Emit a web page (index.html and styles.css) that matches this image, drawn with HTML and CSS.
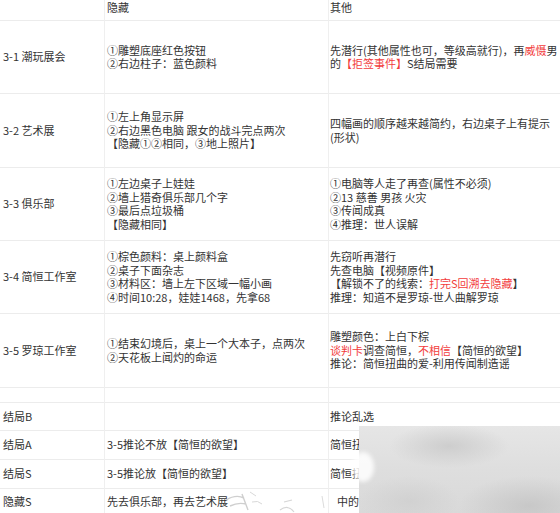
FILE: index.html
```html
<!DOCTYPE html>
<html lang="zh-CN">
<head>
<meta charset="utf-8">
<title>攻略表</title>
<link rel="stylesheet" href="styles.css">
</head>
<body>
<div class="page">
  <div class="table">
    <div class="c c1 h"></div>
    <div class="c c2 h"><div class="t">隐藏</div></div>
    <div class="c c3 h"><div class="t">其他</div></div>

    <div class="c c1"><div class="t">3-1 潮玩展会</div></div>
    <div class="c c2"><div class="t">①雕塑底座红色按钮<br>②右边柱子：蓝色颜料</div></div>
    <div class="c c3"><div class="t">先潜行(其他属性也可，等级高就行)，再<span class="red">威慑</span>男<br>的<span class="red">【拒签事件】</span>S结局需要</div></div>

    <div class="c c1"><div class="t">3-2 艺术展</div></div>
    <div class="c c2"><div class="t">①左上角显示屏<br>②右边黑色电脑 跟女的战斗完点两次<br>【隐藏①②相同，③地上照片】</div></div>
    <div class="c c3"><div class="t">四幅画的顺序越来越简约，右边桌子上有提示<br>(形状)</div></div>

    <div class="c c1"><div class="t">3-3 俱乐部</div></div>
    <div class="c c2"><div class="t">①左边桌子上娃娃<br>②墙上猎奇俱乐部几个字<br>③最后点垃圾桶<br>【隐藏相同】</div></div>
    <div class="c c3"><div class="t">①电脑等人走了再查(属性不必须)<br>②13 慈善 男孩 火灾<br>③传闻成真<br>④推理：世人误解</div></div>

    <div class="c c1"><div class="t">3-4 简恒工作室</div></div>
    <div class="c c2"><div class="t">①棕色颜料：桌上颜料盒<br>②桌子下面杂志<br>③材料区：墙上左下区域一幅小画<br>④时间10:28，娃娃1468，先拿68</div></div>
    <div class="c c3"><div class="t">先窃听再潜行<br>先查电脑【视频原件】<br>【解锁不了的线索：<span class="red">打完S回溯去隐藏</span>】<br>推理：知道不是罗琼-世人曲解罗琼</div></div>

    <div class="c c1"><div class="t">3-5 罗琼工作室</div></div>
    <div class="c c2"><div class="t">①结束幻境后，桌上一个大本子，点两次<br>②天花板上闻灼的命运</div></div>
    <div class="c c3"><div class="t">雕塑颜色：上白下棕<br><span class="red">谈判卡</span>调查简恒，<span class="red">不相信</span>【简恒的欲望】<br>推论：简恒扭曲的爱-利用传闻制造谣</div></div>

    <div class="c c1"></div>
    <div class="c c2"></div>
    <div class="c c3"></div>

    <div class="c c1"><div class="t">结局B</div></div>
    <div class="c c2"></div>
    <div class="c c3"><div class="t">推论乱选</div></div>

    <div class="c c1"><div class="t">结局A</div></div>
    <div class="c c2"><div class="t">3-5推论不放【简恒的欲望】</div></div>
    <div class="c c3"><div class="t">简恒扭曲的爱</div></div>

    <div class="c c1"><div class="t">结局S</div></div>
    <div class="c c2"><div class="t">3-5推论放【简恒的欲望】</div></div>
    <div class="c c3"><div class="t">简恒扭曲的爱</div></div>

    <div class="c c1"><div class="t">隐藏S</div></div>
    <div class="c c2"><div class="t">先去俱乐部，再去艺术展</div></div>
    <div class="c c3"><div class="t shift">中的</div></div>
  </div>

  <div class="blur"></div>
  <div class="blob"></div>
  <svg class="sketch" width="120" height="30" viewBox="0 0 120 30">
    <path d="M4 12 Q14 6 22 10 M8 18 Q16 14 24 16 M20 6 L26 22" stroke="#cfcfcf" stroke-width="1.4" fill="none"/>
    <path d="M28 4 L34 8 M30 14 Q36 12 40 16" stroke="#d8d8d8" stroke-width="1" fill="none"/>
    <path d="M58 22 Q66 16 72 24 M62 14 L70 12" stroke="#d6d6d6" stroke-width="1.2" fill="none"/>
    <path d="M100 8 L102 20" stroke="#dcdcdc" stroke-width="1" fill="none"/>
  </svg>
</div>
</body>
</html>
```

FILE: styles.css
```css
html, body {
  margin: 0;
  padding: 0;
  background: #ffffff;
}

.page {
  position: relative;
  width: 560px;
  height: 513px;
  overflow: hidden;
  font-family: "Noto Sans CJK SC", "Noto Sans", sans-serif;
  font-size: 11px;
  line-height: 13.5px;
  color: #333333;
}

.table {
  display: grid;
  grid-template-columns: 105px 224px 1fr;
  grid-template-rows: 21px 73px 74px 73px 73px 74px 15px 28px 29px 29px 26px;
}

.c {
  display: flex;
  align-items: center;
  border-bottom: 1px solid #ececec;
  white-space: nowrap;
  min-width: 0;
}

.t {
  white-space: nowrap;
}

.c1 {
  padding-left: 3px;
  border-right: 1px solid #efefef;
}

.c2 {
  padding-left: 2px;
  border-right: 1px solid #efefef;
}

.c3 {
  padding-left: 1px;
}

.h {
  align-items: flex-start;
  padding-top: 1px;
}

.red {
  color: #f23c3c;
}

.shift {
  padding-left: 7px;
}

.blur {
  position: absolute;
  left: 359px;
  top: 426px;
  width: 201px;
  height: 87px;
  background:
    radial-gradient(ellipse 60px 22px at 90px 20px, rgba(200,200,200,0.8), rgba(200,200,200,0) 100%),
    radial-gradient(ellipse 70px 30px at 170px 80px, rgba(195,195,195,0.8), rgba(195,195,195,0) 100%),
    radial-gradient(ellipse 50px 25px at 50px 75px, rgba(205,205,205,0.7), rgba(205,205,205,0) 100%),
    linear-gradient(180deg, #e6e6e6 0%, #dedede 50%, #d9d9d9 100%);
}

.blob {
  position: absolute;
  left: 352px;
  top: 452px;
  width: 22px;
  height: 30px;
  border-radius: 50%;
  background: rgba(255,255,255,0.85);
  filter: blur(2px);
}

.sketch {
  position: absolute;
  left: 222px;
  top: 488px;
}
```
